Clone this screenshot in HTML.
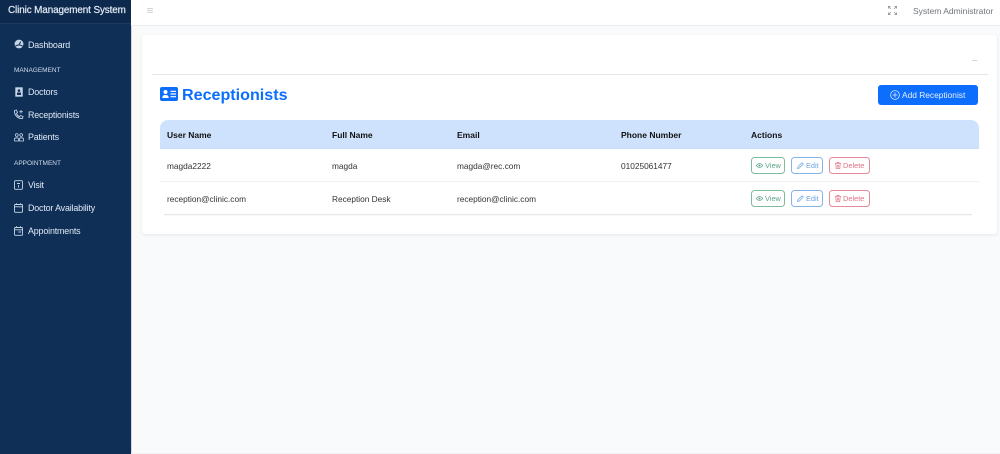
<!DOCTYPE html>
<html><head><meta charset="utf-8"><style>
*{box-sizing:border-box}
html,body{margin:0;padding:0;width:1000px;height:454px;overflow:hidden;background:#f8fafc;font-family:"Liberation Sans",sans-serif;color:#212529}
.a{position:absolute;white-space:nowrap}
#side{position:absolute;left:0;top:0;width:131px;height:454px;background:#0f2f57;box-shadow:1px 0 2px rgba(15,47,87,.25)}
#brand{position:absolute;left:0;top:0;width:131px;height:24px;background:#0d2a4e;border-bottom:1px solid #1b3b63}
.n{position:absolute;left:28px;font-size:8.9px;letter-spacing:-.15px;color:#dfe9f5;white-space:nowrap;line-height:12px}
.h{position:absolute;left:14px;font-size:6.5px;color:#d0dcea;white-space:nowrap;line-height:10px}
svg{position:absolute}
.th{position:absolute;top:129px;font-size:8.5px;font-weight:bold;color:#111;line-height:12px;white-space:nowrap}
.td{position:absolute;font-size:8.3px;color:#333;line-height:12px;white-space:nowrap}
.b{position:absolute;height:17px;border:1px solid;border-radius:3.5px;background:#fff;font-size:7.4px;line-height:15px;white-space:nowrap}
.b span{position:absolute;top:0}
.v{left:751px;width:34px;border-color:#7fbb9f;color:#62a688}
.e{left:791px;width:32px;border-color:#85b3ea;color:#6ea3e2}
.d{left:829px;width:41px;border-color:#e58a99;color:#df7284}
</style></head><body>
<div id="side">
<div id="brand"></div>
<div class="a" style="left:8px;top:4px;font-size:9.9px;color:#e4ecf5;line-height:14px;-webkit-text-stroke:.2px #e4ecf5;letter-spacing:-.1px">Clinic Management System</div>

<svg style="left:14px;top:39px" width="10" height="10" viewBox="0 0 10 10"><circle cx="5" cy="5" r="4.4" fill="#c6d5e6"/><path d="M1.500 7.200C3 5.600 7 5.600 8.500 7.200" stroke="#0f2f57" fill="none"/><path d="M5 5.500L6.800 2.700" stroke="#0f2f57"/></svg>
<div class="n" style="top:39px">Dashboard</div>
<div class="h" style="top:66px">MANAGEMENT</div>

<svg style="left:15px;top:87px" width="8" height="10" viewBox="0 0 8 10"><rect x=".3" y=".3" width="7.400" height="9.400" fill="#c6d5e6"/><circle cx="4" cy="3.600" r="1.300" fill="#0f2f57"/><rect x="2" y="5.500" width="4" height="2.500" fill="#0f2f57"/></svg>
<div class="n" style="top:86px">Doctors</div>

<svg style="left:13px;top:109px" width="11" height="11" viewBox="0 0 11 11"><path d="M1.500 1.500L3.500 1L4.500 3.500L3.300 4.500C4 6 5 7 6.500 7.700L7.500 6.500L10 7.500L9.500 9.500C5 10 1 6 1.500 1.500Z" fill="none" stroke="#c6d5e6" stroke-width=".9"/><path d="M8 1V4.500M6.300 2.700H9.700" stroke="#c6d5e6" stroke-width=".8"/></svg>
<div class="n" style="top:109px">Receptionists</div>

<svg style="left:14px;top:133px" width="10" height="9" viewBox="0 0 10 9"><circle cx="2.800" cy="2" r="1.400" fill="none" stroke="#c6d5e6" stroke-width=".8"/><circle cx="7.200" cy="2" r="1.400" fill="none" stroke="#c6d5e6" stroke-width=".8"/><path d="M.5 8V6C.5 5 1.500 4.800 2.800 4.800S4.500 5 4.500 6V8ZM5.500 8V6C5.500 5 6 4.800 7.200 4.800S9.500 5 9.500 6V8Z" fill="none" stroke="#c6d5e6" stroke-width=".8"/></svg>
<div class="n" style="top:131px">Patients</div>

<div class="h" style="top:159px">APPOINTMENT</div>

<svg style="left:14px;top:180px" width="9" height="10" viewBox="0 0 9 10"><rect x=".5" y=".7" width="8" height="8.600" rx="1" fill="none" stroke="#c6d5e6" stroke-width=".9"/><path d="M3 3.500H6M4.500 5V7.500" stroke="#c6d5e6" stroke-width=".9"/></svg>
<div class="n" style="top:179px">Visit</div>

<svg style="left:14px;top:203px" width="9" height="10" viewBox="0 0 9 10"><rect x=".5" y="1.500" width="8" height="7.800" rx=".8" fill="none" stroke="#c6d5e6" stroke-width=".9"/><path d="M.5 3.800H8.500M2.500 .3V2M6.500 .3V2" stroke="#c6d5e6" stroke-width=".9"/></svg>
<div class="n" style="top:202px">Doctor Availability</div>

<svg style="left:14px;top:226px" width="9" height="10" viewBox="0 0 9 10"><rect x=".5" y="1.500" width="8" height="7.800" rx=".8" fill="none" stroke="#c6d5e6" stroke-width=".9"/><path d="M.5 3.800H8.500M2.500 .3V2M6.500 .3V2M4.500 6H7" stroke="#c6d5e6" stroke-width=".9"/></svg>
<div class="n" style="top:225px">Appointments</div>
</div>

<div class="a" style="left:131px;top:0;width:869px;height:26px;background:#fff;border-bottom:1px solid #e9ecef"></div>
<div class="a" style="left:132px;top:26px;width:10px;height:428px;background:#fafbf9"></div>
<div class="a" style="left:131px;top:453px;width:869px;height:1px;background:#f0f2f4"></div>
<svg style="left:147px;top:8px" width="6" height="5" viewBox="0 0 6 5"><path d="M0 .5H6M0 2.500H6M0 4.500H6" stroke="#c4c7cb" stroke-width=".8"/></svg>
<svg style="left:888px;top:6px" width="9" height="9" viewBox="0 0 9 9"><path d="M.4 2.600V.4H2.600M.4 .4L3 3M6.400 .4H8.600V2.600M8.600 .4L6 3M.4 6.400V8.600H2.600M.4 8.600L3 6M6.400 8.600H8.600V6.400M8.600 8.600L6 6" fill="none" stroke="#8a8f94" stroke-width=".7"/></svg>
<div class="a" style="left:913px;top:5px;font-size:8.5px;color:#707479;line-height:12px">System Administrator</div>

<div class="a" style="left:142px;top:35px;width:855px;height:199px;background:#fff;border-radius:3px;box-shadow:0 1px 3px rgba(40,50,70,.09)"></div>
<div class="a" style="left:152px;top:74px;width:836px;height:1px;background:#e3e5e8"></div>
<div class="a" style="left:972px;top:60px;width:5px;height:1px;background:#d2d4d7"></div>

<svg style="left:160px;top:87px" width="18" height="14" viewBox="0 0 18 14"><rect width="18" height="14" rx="2" fill="#0d6efd"/><circle cx="5.500" cy="5" r="2" fill="#fff"/><path d="M2.300 11C2.300 8.800 3.500 8 5.500 8S8.700 8.800 8.700 11Z" fill="#fff"/><path d="M10.500 4.300H16M10.500 7H16M10.500 9.700H16" stroke="#fff" stroke-width="1.200"/></svg>
<div class="a" style="left:182px;top:85px;font-size:16.1px;font-weight:bold;color:#0d6efd;line-height:21px">Receptionists</div>

<div class="a" style="left:878px;top:85px;width:100px;height:20px;background:#0d6efd;border-radius:3px"></div>
<svg style="left:890px;top:90px" width="10" height="10" viewBox="0 0 10 10"><circle cx="5" cy="5" r="4.400" fill="none" stroke="#dbe8ff" stroke-width=".8"/><path d="M5 2.500V7.500M2.500 5H7.500" stroke="#dbe8ff" stroke-width=".8"/></svg>
<div class="a" style="left:902px;top:89px;font-size:8.4px;color:#e6efff;line-height:12px">Add Receptionist</div>

<div class="a" style="left:160px;top:120px;width:819px;height:29px;background:#cfe2fd;border-radius:8px 8px 0 0;border-bottom:1px solid #c9dcf8"></div>
<div class="th" style="left:167px">User Name</div>
<div class="th" style="left:332px">Full Name</div>
<div class="th" style="left:457px">Email</div>
<div class="th" style="left:621px">Phone Number</div>
<div class="th" style="left:751px">Actions</div>

<div class="td" style="left:167px;top:160px">magda2222</div>
<div class="td" style="left:332px;top:160px">magda</div>
<div class="td" style="left:457px;top:160px">magda@rec.com</div>
<div class="td" style="left:621px;top:160px">01025061477</div>
<div class="a" style="left:160px;top:181px;width:819px;height:1px;background:#eff1f3"></div>

<div class="td" style="left:167px;top:193px">reception@clinic.com</div>
<div class="td" style="left:332px;top:193px">Reception Desk</div>
<div class="td" style="left:457px;top:193px">reception@clinic.com</div>
<div class="a" style="left:164px;top:214px;width:808px;height:1px;background:#e6e8eb;box-shadow:0 1px 1px rgba(0,0,0,.04)"></div>

<div class="b v" style="top:157px"><span style="left:13px">View</span></div>
<div class="b e" style="top:157px"><span style="left:14px">Edit</span></div>
<div class="b d" style="top:157px"><span style="left:13px">Delete</span></div>
<div class="b v" style="top:190px"><span style="left:13px">View</span></div>
<div class="b e" style="top:190px"><span style="left:14px">Edit</span></div>
<div class="b d" style="top:190px"><span style="left:13px">Delete</span></div>

<svg style="left:756px;top:162px" width="7" height="7" viewBox="0 0 7 7"><path d="M.3 3.500C2 1 5 1 6.700 3.500C5 6 2 6 .3 3.500Z" fill="none" stroke="#62a688" stroke-width=".7"/><circle cx="3.500" cy="3.500" r="1" fill="#62a688"/></svg>
<svg style="left:756px;top:195px" width="7" height="7" viewBox="0 0 7 7"><path d="M.3 3.500C2 1 5 1 6.700 3.500C5 6 2 6 .3 3.500Z" fill="none" stroke="#62a688" stroke-width=".7"/><circle cx="3.500" cy="3.500" r="1" fill="#62a688"/></svg>
<svg style="left:797px;top:162px" width="7" height="7" viewBox="0 0 7 7"><path d="M.5 6.500L1 4.700L5 .7L6.300 2L2.300 6Z" fill="none" stroke="#6ea3e2" stroke-width=".7"/></svg>
<svg style="left:797px;top:195px" width="7" height="7" viewBox="0 0 7 7"><path d="M.5 6.500L1 4.700L5 .7L6.300 2L2.300 6Z" fill="none" stroke="#6ea3e2" stroke-width=".7"/></svg>
<svg style="left:835px;top:162px" width="6" height="7" viewBox="0 0 6 7"><path d="M0 1.300H6M2 1.300V.4H4V1.300M.8 1.500L1.200 6.700H4.800L5.200 1.500M2.300 2.800V5.500M3.700 2.800V5.500" fill="none" stroke="#df7284" stroke-width=".7"/></svg>
<svg style="left:835px;top:195px" width="6" height="7" viewBox="0 0 6 7"><path d="M0 1.300H6M2 1.300V.4H4V1.300M.8 1.500L1.200 6.700H4.800L5.200 1.500M2.300 2.800V5.500M3.700 2.800V5.500" fill="none" stroke="#df7284" stroke-width=".7"/></svg>
</body></html>
